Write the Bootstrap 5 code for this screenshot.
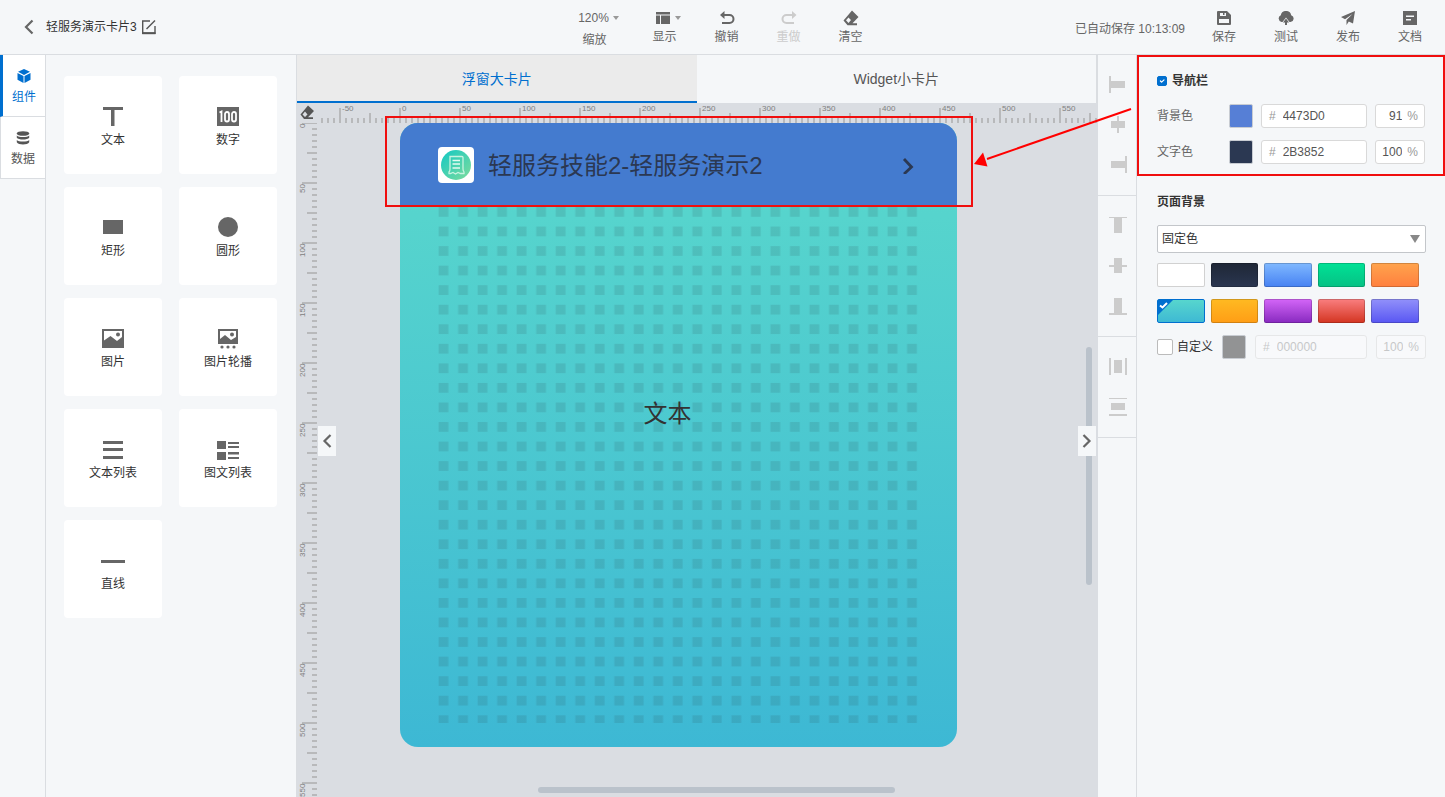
<!DOCTYPE html>
<html lang="zh-CN">
<head>
<meta charset="utf-8">
<meta name="viewport" content="width=device-width, initial-scale=1">
<title>轻服务演示卡片3</title>
<link href="https://cdn.jsdelivr.net/npm/bootstrap@5.3.0/dist/css/bootstrap.min.css" rel="stylesheet">
<style>
:root{--ink:#333;--muted:#666;--line:#dadde1;--blue:#006fcf;--panel:#f5f7f9;--stage:#dadde2;--tick:#b8b9bb}
body{font-family:"Liberation Sans","Noto Sans CJK SC",sans-serif;font-size:12px;line-height:18px;color:var(--ink);background:var(--panel)}
button,input,select{font:inherit}
svg{display:block}
.plain{border:0;background:none;padding:0;color:inherit}
.shrinkable{min-width:0;min-height:0}
.topbar{height:55px;border-bottom:1px solid var(--line);color:var(--muted)}
.doc-name{color:var(--ink)}
.tool{width:62px;height:54px;padding-top:9px}
.tool .glyph{height:18px;margin-bottom:1px}
.tool.off{color:#ccc}
.caret{width:0;height:0;border:3px solid transparent;border-top:4px solid #999;border-bottom:0}
.rail{width:46px;border-right:1px solid var(--line)}
.rail-item{height:62px;padding-top:4px;gap:5px;background:#fff;border-bottom:1px solid var(--line);border-left:1px solid var(--line);color:#555}
.rail-item.on{color:var(--blue);border-left:3px solid var(--blue)}
.parts{width:251px;border-right:1px solid var(--line);padding:21px 18px}
.parts-grid{display:grid;grid-template-columns:98px 98px;column-gap:17px;row-gap:13px}
.part{height:98px;background:#fff;border-radius:4px;padding-top:28px}
.part svg{fill:#666}
.part span{margin-top:3px}
.view-tabs{height:48px;border-right:2px solid var(--line)}
.view-tabs button{font-size:14px;color:#555;padding-top:2px;border-bottom:2px solid transparent}
.view-tabs button.on{background:#ebebeb;color:var(--blue);border-color:var(--blue)}
.stage{background:var(--stage)}
.corner{width:21px;height:20px;padding:2px 3px}
.ruler{color:#808080;font-size:8px;line-height:12px;overflow:hidden}
.ruler-x{height:20px;padding-left:22px;
 background:repeating-linear-gradient(90deg,var(--tick) 0 2px,transparent 2px 60px) 21px 5px/1200px 15px no-repeat,
 repeating-linear-gradient(90deg,var(--tick) 0 2px,transparent 2px 30px) 51px 10px/1200px 10px no-repeat,
 repeating-linear-gradient(90deg,var(--tick) 0 2px,transparent 2px 6px) 3px 15px/1200px 5px no-repeat}
.ruler-x span{flex:0 0 60px;padding-left:2px}
.ruler-y{width:21px;
 background:repeating-linear-gradient(var(--tick) 0 2px,transparent 2px 60px) 5px -1px/15px 1200px no-repeat,
 repeating-linear-gradient(var(--tick) 0 2px,transparent 2px 30px) 10px -1px/10px 1200px no-repeat,
 repeating-linear-gradient(var(--tick) 0 2px,transparent 2px 6px) 15px -1px/5px 1200px no-repeat}
.ruler-y span{flex:0 0 60px;writing-mode:vertical-rl;transform:rotate(180deg);text-align:right;align-self:flex-start;padding-bottom:1px}
.design{width:557px;margin-left:82px;border-radius:18px;background:linear-gradient(#58d7cd,#56d4cd 15%,#3db8d4)}
.design-nav{height:84px;padding:0 38px;background:#447bcf;border-radius:18px 18px 0 0;color:#2b3852;font-size:24px;line-height:36px}
.design-title{margin-left:14px;padding-top:1px}
.logo{width:36px;height:36px;border-radius:4px;background:#fff}
.design-body{padding:0 38px 24px}
.sample{inset:0 0 126px -22px;font-size:24px;line-height:36px}
.callout{inset:-7px -16px 0 -15px;border:2px solid #f00e0e;z-index:3}
.pointer{left:100%;top:-13px}
.fold{top:50%;width:18px;height:30px;background:var(--panel);color:#555;z-index:2}
.fold.l{left:21px}.fold.r{right:2px}
.thumb{background:#bac2cb;border-radius:3px}
.thumb.v{right:6px;top:292px;width:6px;height:238px}
.thumb.h{left:241px;bottom:4px;width:357px;height:6px}
.aligns{width:39px;border-right:1px solid var(--line)}
.aligns>div{padding:20px 0 20px 2px;gap:20px;border-bottom:1px solid var(--line)}
.aligns svg{fill:#ccc}
.props{width:308px}
.boxed{border:2px solid #f00e0e;padding:15px 18px 10px}
.prop-head{margin-bottom:14px;gap:5px}
.prop-row{height:24px}
.prop-row+.prop-row{margin-top:12px}
.name-col{flex:0 0 72px;color:var(--muted)}
.form-check-input.sm{width:10px;height:10px;border-radius:2px;margin:0}
.form-check-input:checked{background-color:var(--blue);border-color:var(--blue)}
.form-check-input.md{width:16px;height:16px;border-radius:2px;margin:0;border-color:#bbb}
.chip{flex:0 0 24px;height:24px;border:1px solid #c8ccd2;border-radius:2px}
.chip.nav-bg{background:#567fd6}.chip.nav-ink{background:#2b3852}.chip.own-bg{background:#929394}
.field{height:24px;border:1px solid #d9d9d9;border-radius:3px;background:#fff;color:#999}
.field input{min-width:0;width:100%;border:0;padding:0;background:none;color:#555;outline:0}
.field.hex{padding:0 7px;gap:7px}
.field.pct{flex:0 0 50px;padding:0 6px 0 0;gap:5px}
.field.pct input{text-align:right}
.off-field{opacity:.5;background:#fbfcfd}.off-field input{color:#999}
.bg-sec{padding:17px 19px 0 20px}
.bg-head{margin-bottom:14px}
.own-row{gap:9px}
.form-select{height:28px;padding:0 5px 0 4px;font-size:12px;color:var(--ink);border:1px solid #c3c6ca;border-radius:2px;background:#fff url("data:image/svg+xml,%3Csvg xmlns='http://www.w3.org/2000/svg' viewBox='0 0 10 8'%3E%3Cpath fill='%23888' d='M0 0h10L5 8z'/%3E%3C/svg%3E") no-repeat right 5px center/10px 8px}
.shades{display:grid;grid-template-columns:repeat(5,1fr);column-gap:6px;row-gap:12px;margin:10px 7px 12px 0}
.shade{height:24px;border:1px solid rgba(0,0,0,.18);border-radius:2px;background-origin:border-box}
.shade.on{border-color:var(--blue)}
.s1{background-color:#fff}.s2{background-image:linear-gradient(#1f2736,#2a3650)}.s3{background-image:linear-gradient(#80b9ff,#4681f2)}
.s4{background-image:linear-gradient(#00e296,#06c184)}.s5{background-image:linear-gradient(#ffa44d,#ff7f3e)}
.s6{background-image:linear-gradient(#58d7cd,#3db8d4)}.s7{background-image:linear-gradient(#ffba22,#ff9d15)}
.s8{background-image:linear-gradient(#d466f8,#8729bf)}.s9{background-image:linear-gradient(#fa7f80,#d33420)}.s10{background-image:linear-gradient(#9291fa,#5856f3)}
</style>
</head>
<body>
<div class="vh-100 d-flex flex-column">
<header class="topbar d-flex flex-shrink-0">
  <div class="d-flex align-items-center flex-fill w-25 ps-4">
    <button class="plain" aria-label="返回"><svg width="10" height="16" fill="none" stroke="#666" stroke-width="2.200"><path d="M8.500 1.500 2 8l6.500 6.500"/></svg></button>
    <span class="doc-name ms-2 ps-1 me-1">轻服务演示卡片3</span>
    <button class="plain" aria-label="重命名"><svg width="16" height="16" fill="none" stroke="#555" stroke-width="1.400"><path d="M9 2H1.700v12.300H14V7"/><path d="M5.500 10 14 1.500"/><path d="M1.200 14.200h13.300" stroke-width="2"/></svg></button>
  </div>
  <div class="d-flex">
    <button class="tool plain d-flex flex-column align-items-center me-2"><span class="d-flex align-items-center gap-1 ps-2">120%<i class="caret"></i></span><span class="mt-1">缩放</span></button>
    <button class="tool plain d-flex flex-column align-items-center"><span class="glyph d-flex align-items-center gap-1 ps-2"><svg width="15" height="12" fill="#666"><path d="M0 0h14v2.500H0zM0 3.500h4V12H0zM5 3.500h9V12H5z"/></svg><i class="caret"></i></span><span>显示</span></button>
    <button class="tool plain d-flex flex-column align-items-center"><span class="glyph d-flex align-items-center"><svg width="16" height="14" fill="none" stroke="#666" stroke-width="2"><path d="M3 4h7.500a3.800 3.800 0 0 1 0 8H3"/><path d="M1 4 5.500 0v8z" fill="#666" stroke="none"/></svg></span><span>撤销</span></button>
    <button class="tool plain off d-flex flex-column align-items-center" disabled><span class="glyph d-flex align-items-center"><svg width="16" height="14" fill="none" stroke="#ccc" stroke-width="2"><path d="M13 4H5.500a3.800 3.800 0 0 0 0 8H13"/><path d="M15.500 4 11 0v8z" fill="#ccc" stroke="none"/></svg></span><span>重做</span></button>
    <button class="tool plain d-flex flex-column align-items-center"><span class="glyph d-flex align-items-center"><svg width="16" height="16"><path fill="#666" fill-rule="evenodd" d="M9 .500 15.500 7 9.500 13.200H14V15.200H4.500L.500 10.500zM5.500 7.500 3 10.200l2.500 2.800L8 10z"/></svg></span><span>清空</span></button>
  </div>
  <div class="d-flex align-items-center justify-content-end flex-fill w-25 pe-1">
    <span class="me-2 pt-1">已自动保存 10:13:09</span>
    <button class="tool plain d-flex flex-column align-items-center"><span class="glyph d-flex align-items-center"><svg width="14" height="14" fill="#666"><path fill-rule="evenodd" d="M0 1q0-1 1-1h9l4 4v9q0 1-1 1H1q-1 0-1-1zM3 2v3h6V2H7.500v2H6V2zM2 8v4h10V8z"/></svg></span><span>保存</span></button>
    <button class="tool plain d-flex flex-column align-items-center"><span class="glyph d-flex align-items-center"><svg width="16" height="14" fill="#666"><path d="M3.500 11A3.600 3.600 0 0 1 2.800 4.200a5.300 5.300 0 0 1 10.400 0A3.500 3.500 0 0 1 12.500 11H11.500L8 6.500 4.500 11z"/><path d="m8 7.500 3 4H9V14H7v-2.500H5z"/></svg></span><span>测试</span></button>
    <button class="tool plain d-flex flex-column align-items-center"><span class="glyph d-flex align-items-center"><svg width="14" height="14" fill="#666"><path d="M14 0 0 6l4 2.200L11.500 3 5.500 9v5l2.300-3.600L12 12.500z"/></svg></span><span>发布</span></button>
    <button class="tool plain d-flex flex-column align-items-center"><span class="glyph d-flex align-items-center"><svg width="14" height="14" fill="#666"><path fill-rule="evenodd" d="M0 0h14v14H0zM3 4.500V6h8V4.500zM3 8v1.500h5V8z"/></svg></span><span>文档</span></button>
  </div>
</header>

<main class="d-flex flex-fill shrinkable">
  <nav class="rail flex-shrink-0 d-flex flex-column">
    <button class="rail-item on plain d-flex flex-column align-items-center justify-content-center"><svg width="14" height="14" fill="#006fcf"><path d="m7 0 6 2.800L7 6 1 2.800zM.500 4l6 3v7l-6-3.200zM13.500 4l-6 3v7l6-3.200z"/></svg>组件</button>
    <button class="rail-item plain d-flex flex-column align-items-center justify-content-center"><svg width="14" height="14" fill="#555"><ellipse cx="7" cy="2.500" rx="6.200" ry="2.300"/><path d="M.800 4.500c1.500 2 10.900 2 12.400 0v2.300c-1.500 2.400-10.900 2.400-12.400 0zM.800 9c1.500 2 10.900 2 12.400 0v2.300c-1.500 3-10.900 3-12.400 0z"/></svg>数据</button>
  </nav>

  <aside class="parts flex-shrink-0">
    <div class="parts-grid">
      <button class="part plain d-flex flex-column align-items-center"><svg width="24" height="24"><path d="M2 3h20v3h-8.500V22h-3.500V6H2z"/></svg><span>文本</span></button>
      <button class="part plain d-flex flex-column align-items-center"><svg width="24" height="24"><path d="M1 3h22v19H1z"/><g fill="none" stroke="#fff" stroke-width="1.800"><path d="M3.500 8.500 5.500 7.500v10.500"/><rect x="9" y="8" width="4" height="9.500" rx="2"/><rect x="16" y="8" width="4" height="9.500" rx="2"/></g></svg><span>数字</span></button>
      <button class="part plain d-flex flex-column align-items-center"><svg width="24" height="24"><path d="M2 5h20v14H2z"/></svg><span>矩形</span></button>
      <button class="part plain d-flex flex-column align-items-center"><svg width="24" height="24"><circle cx="12" cy="12" r="10"/></svg><span>圆形</span></button>
      <button class="part plain d-flex flex-column align-items-center"><svg width="24" height="24"><path fill-rule="evenodd" d="M1 3h22v19H1zM3 5v9.500l6.500-4.500 6.500 5 5-4V5z"/><circle cx="17" cy="8.500" r="2"/></svg><span>图片</span></button>
      <button class="part plain d-flex flex-column align-items-center"><svg width="24" height="24"><path fill-rule="evenodd" d="M2 3h20v15H2zM4 5v8l5-4 6 5 5-3V5z"/><circle cx="16" cy="8.500" r="2"/><circle cx="6" cy="21" r="1.600"/><circle cx="12" cy="21" r="1.600"/><circle cx="18" cy="21" r="1.600"/></svg><span>图片轮播</span></button>
      <button class="part plain d-flex flex-column align-items-center"><svg width="24" height="24"><path d="M2 4h20v3H2zM2 11h20v3H2zM2 19h20v3H2z"/></svg><span>文本列表</span></button>
      <button class="part plain d-flex flex-column align-items-center"><svg width="24" height="24"><path d="M1 4h9v8H1zM1 15h9v8H1zM12 5h11v2H12zM12 9h11v2H12zM12 15h11v2.500H12zM12 20h11v2H12z"/></svg><span>图文列表</span></button>
      <button class="part plain d-flex flex-column align-items-center"><svg width="24" height="24"><path d="M0 12h24v3H0z"/></svg><span>直线</span></button>
    </div>
  </aside>

  <section class="flex-fill d-flex flex-column position-relative shrinkable">
    <div class="view-tabs d-flex flex-shrink-0">
      <button class="plain on flex-fill w-50">浮窗大卡片</button>
      <button class="plain flex-fill w-50">Widget小卡片</button>
    </div>
    <div class="stage flex-fill d-flex flex-column shrinkable">
      <div class="d-flex flex-shrink-0">
        <div class="corner flex-shrink-0"><svg width="15" height="16"><path fill="#555" fill-rule="evenodd" d="M8 .500 14 6 8 12.200H13V14H4L.500 9.500zM5 6.500 2.500 9.500 5 12l2.500-2.500z"/></svg></div>
        <div class="ruler ruler-x d-flex flex-fill shrinkable"><span>-50</span><span>0</span><span>50</span><span>100</span><span>150</span><span>200</span><span>250</span><span>300</span><span>350</span><span>400</span><span>450</span><span>500</span><span>550</span></div>
      </div>
      <div class="d-flex flex-fill align-items-start shrinkable">
        <div class="ruler ruler-y d-flex flex-column flex-shrink-0 h-100"><span>0</span><span>50</span><span>100</span><span>150</span><span>200</span><span>250</span><span>300</span><span>350</span><span>400</span><span>450</span><span>500</span><span>550</span></div>
        <article class="design flex-shrink-0">
          <div class="design-nav d-flex align-items-center position-relative">
            <svg class="logo flex-shrink-0" viewBox="0 0 36 36"><defs><linearGradient id="leaf" x2="1" y2="1"><stop stop-color="#12c8c4"/><stop offset="1" stop-color="#7fdc9c"/></linearGradient></defs><circle cx="18" cy="18" r="15" fill="url(#leaf)"/><path d="M12 9.500h12q1 0 1 1V22q0 1.500 1 3v1.500h-3.500l-2.500-1-2.500 1.500-2.500-1.500-2.500 1H11V25q1-1 1-3z" fill="none" stroke="#c9f3e0" stroke-width="1.300"/><path d="M14.500 13.500h7.500M14.500 17h7.500M14.500 21h7.500" stroke="#e4faf1" stroke-width="1.600"/></svg>
            <span class="design-title flex-fill">轻服务技能2-轻服务演示2</span>
            <svg class="me-1" width="14" height="18" fill="none" stroke="#2b3852" stroke-width="2.800"><path d="m3 3 7.500 8L3 18"/></svg>
            <div class="callout position-absolute pe-none">
              <svg class="pointer position-absolute" width="164" height="68"><path d="M160 4 16 54" stroke="#f00" stroke-width="2"/><path d="M3 59 12 47.500l4.500 14z" fill="#f00"/></svg>
            </div>
          </div>
          <div class="design-body position-relative">
            <svg width="100%" height="516"><defs><pattern id="cells" width="19.520" height="19.550" patternUnits="userSpaceOnUse"><path d="M.600 0h9.800v9.800H.600z" fill="#2d4a52" fill-opacity=".14"/></pattern></defs><rect width="100%" height="100%" fill="url(#cells)"/></svg>
            <div class="sample position-absolute d-flex align-items-center justify-content-center">文本</div>
          </div>
        </article>
      </div>
    </div>
    <button class="fold l plain position-absolute d-flex align-items-center justify-content-center" aria-label="收起左栏"><svg width="10" height="14" fill="none" stroke="#666" stroke-width="2.200"><path d="M8.500 1 2.500 7l6 6"/></svg></button>
    <button class="fold r plain position-absolute d-flex align-items-center justify-content-center" aria-label="收起右栏"><svg width="10" height="14" fill="none" stroke="#666" stroke-width="2.200"><path d="m1.500 1 6 6-6 6"/></svg></button>
    <div class="thumb v position-absolute"></div>
    <div class="thumb h position-absolute"></div>
  </section>

  <div class="aligns flex-shrink-0">
    <div class="d-flex flex-column align-items-center">
      <button class="plain" aria-label="左对齐"><svg width="20" height="20"><path d="M1 1h2v17H1zM3 6h14v7H3z"/></svg></button>
      <button class="plain" aria-label="水平居中"><svg width="20" height="20"><path d="M3 6h14v7H3zM9 1h2v17H9z"/></svg></button>
      <button class="plain" aria-label="右对齐"><svg width="20" height="20"><path d="M3 6h14v7H3zM17 1h2v17h-2z"/></svg></button>
    </div>
    <div class="d-flex flex-column align-items-center">
      <button class="plain" aria-label="顶对齐"><svg width="20" height="20"><path d="M1 1h18v1H1zM6 2h8v15H6z"/></svg></button>
      <button class="plain" aria-label="垂直居中"><svg width="20" height="20"><path d="M6 2h8v15H6zM1 9h18v2H1z"/></svg></button>
      <button class="plain" aria-label="底对齐"><svg width="20" height="20"><path d="M6 2h8v15H6zM1 17h18v2H1z"/></svg></button>
    </div>
    <div class="d-flex flex-column align-items-center">
      <button class="plain" aria-label="水平分布"><svg width="20" height="20"><path d="M1 1h2v17H1zM6 3h8v13H6zM17 1h2v17h-2z"/></svg></button>
      <button class="plain" aria-label="垂直分布"><svg width="20" height="20"><path d="M1 1h18v1H1zM3 6h14v7H3zM1 17h18v2H1z"/></svg></button>
    </div>
  </div>

  <aside class="props flex-shrink-0">
    <div class="boxed">
      <div class="prop-head d-flex align-items-center"><input class="form-check-input sm" type="checkbox" id="nav" checked><label class="fw-bold" for="nav">导航栏</label></div>
      <div class="prop-row d-flex align-items-center">
        <label class="name-col" for="c1">背景色</label><span class="chip nav-bg"></span>
        <div class="field hex d-flex align-items-center flex-fill ms-2">#<input id="c1" value="4473D0"></div>
        <div class="field pct d-flex align-items-center ms-2"><input aria-label="背景不透明度" value="91">%</div>
      </div>
      <div class="prop-row d-flex align-items-center">
        <label class="name-col" for="c2">文字色</label><span class="chip nav-ink"></span>
        <div class="field hex d-flex align-items-center flex-fill ms-2">#<input id="c2" value="2B3852"></div>
        <div class="field pct d-flex align-items-center ms-2"><input aria-label="文字不透明度" value="100">%</div>
      </div>
    </div>
    <div class="bg-sec">
      <label class="bg-head fw-bold d-block" for="kind">页面背景</label>
      <select class="form-select" id="kind"><option>固定色</option></select>
      <div class="shades">
        <button class="shade s1" aria-label="白"></button><button class="shade s2" aria-label="深蓝"></button><button class="shade s3" aria-label="蓝"></button><button class="shade s4" aria-label="绿"></button><button class="shade s5" aria-label="橙"></button>
        <button class="shade on s6 p-0 d-flex" aria-label="青"><svg width="15" height="15"><path d="M0 0h15L0 15z" fill="#006fcf"/><path d="m2 5.500 2.500 2L9 3" fill="none" stroke="#fff" stroke-width="2"/></svg></button><button class="shade s7" aria-label="黄"></button><button class="shade s8" aria-label="紫"></button><button class="shade s9" aria-label="红"></button><button class="shade s10" aria-label="靛"></button>
      </div>
      <div class="own-row d-flex align-items-center">
        <div class="d-flex align-items-center gap-1 flex-shrink-0"><input class="form-check-input md" type="checkbox" id="own"><label for="own">自定义</label></div>
        <span class="chip own-bg"></span>
        <div class="field hex off-field d-flex align-items-center flex-fill">#<input aria-label="自定义颜色" value="000000" disabled></div>
        <div class="field pct off-field d-flex align-items-center"><input aria-label="自定义不透明度" value="100" disabled>%</div>
      </div>
    </div>
  </aside>
</main>
</div>
<script src="https://cdn.jsdelivr.net/npm/bootstrap@5.3.0/dist/js/bootstrap.bundle.min.js"></script>
</body>
</html>
